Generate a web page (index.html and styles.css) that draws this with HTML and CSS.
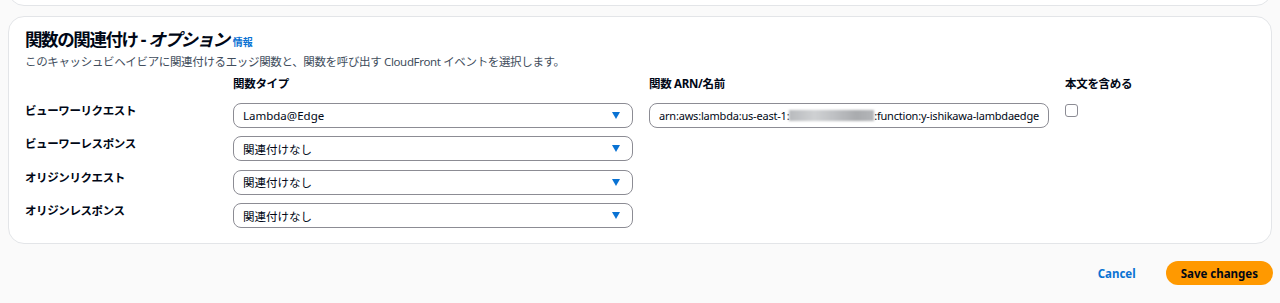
FILE: index.html
```html
<!DOCTYPE html>
<html lang="ja">
<head>
  <meta charset="UTF-8" />
  <meta name="viewport" content="width=device-width, initial-scale=1.0" />
  <title>関数の関連付け</title>
  <link rel="stylesheet" href="styles.css">
</head>
<body>
  <div class="page">
    <div class="card card-prev"></div>

    <div class="card">
      <div class="card-header">
        <h2>関数の関連付け - <em>オプション</em><a href="#" class="info">情報</a></h2>
        <p class="desc">このキャッシュビヘイビアに関連付けるエッジ関数と、関数を呼び出す CloudFront イベントを選択します。</p>
      </div>

      <div class="assoc-grid">
        <div></div>
        <div class="col-head">関数タイプ</div>
        <div class="col-head">関数 ARN/名前</div>
        <div class="col-head">本文を含める</div>

        <div class="row-label">ビューワーリクエスト</div>
        <div class="select">Lambda@Edge<span class="caret"></span></div>
        <div class="input">arn:aws:lambda:us-east-1:<span class="masked"></span>:function:y-ishikawa-lambdaedge</div>
        <div><span class="checkbox"></span></div>

        <div class="row-label">ビューワーレスポンス</div>
        <div class="select">関連付けなし<span class="caret"></span></div>
        <div></div>
        <div></div>

        <div class="row-label">オリジンリクエスト</div>
        <div class="select">関連付けなし<span class="caret"></span></div>
        <div></div>
        <div></div>

        <div class="row-label">オリジンレスポンス</div>
        <div class="select">関連付けなし<span class="caret"></span></div>
        <div></div>
        <div></div>
      </div>
    </div>

    <div class="actions">
      <a href="#" class="btn-cancel">Cancel</a>
      <button class="btn-save">Save changes</button>
    </div>
  </div>
</body>
</html>
```

FILE: styles.css
```css
body {
  margin: 0;
  background-color: #fafafa;
  font-family: 'Noto Sans', 'Noto Sans CJK JP', sans-serif;
  color: #000716;
  overflow: hidden;
}
.page {
  padding: 0 8px;
}
.card {
  background: white;
  border: 1px solid #e3e5e8;
  border-radius: 16px;
  padding: 11px 16px 15px 16px;
}
.card-prev {
  margin-top: -30px;
  padding: 0;
  height: 36px;
  box-sizing: border-box;
  margin-bottom: 10px;
}
.card-header h2 {
  margin: 0;
  font-size: 17.5px;
  line-height: 22px;
  font-weight: 700;
  letter-spacing: -1.4px;
}
.card-header h2 em {
  font-style: italic;
}
.info {
  font-size: 10px;
  font-weight: 700;
  color: #0972d3;
  text-decoration: none;
  letter-spacing: 0;
  margin-left: 4px;
}
.desc {
  margin: 1px 0 0 0;
  font-size: 11.5px;
  line-height: 16px;
  color: #414d5c;
  letter-spacing: -0.35px;
}
.assoc-grid {
  display: grid;
  grid-template-columns: 192px 400px 400px 1fr;
  column-gap: 16px;
  row-gap: 8.5px;
  margin-top: 6px;
}
.col-head {
  font-size: 11.5px;
  font-weight: 700;
  line-height: 16px;
  margin-bottom: 2px;
  letter-spacing: -0.3px;
}
.row-label {
  font-size: 11.5px;
  font-weight: 700;
  line-height: 16px;
  letter-spacing: -0.4px;
}
.select, .input {
  box-sizing: border-box;
  height: 25px;
  border: 1px solid #8c8c94;
  border-radius: 8px;
  display: flex;
  align-items: center;
  padding: 0 9px;
  font-size: 11.5px;
}
.select {
  justify-content: space-between;
}
.input {
  white-space: nowrap;
  overflow: hidden;
  font-size: 11px;
  letter-spacing: -0.2px;
}
.masked {
  display: inline-block;
  width: 86px;
  height: 11px;
  background: linear-gradient(90deg, #b8babd 0%, #cfd1d3 30%, #bdbfc2 55%, #a9abae 80%, #b4b6b9 100%);
  filter: blur(1.2px);
}
.caret {
  width: 0;
  height: 0;
  border-left: 4.5px solid transparent;
  border-right: 4.5px solid transparent;
  border-top: 7px solid #0972d3;
  margin-right: 3px;
}
.checkbox {
  display: block;
  width: 11px;
  height: 11px;
  border: 1px solid #8c8c94;
  border-radius: 3px;
  margin-top: 1px;
}
.actions {
  display: flex;
  justify-content: flex-end;
  align-items: center;
  gap: 30px;
  margin-top: 17px;
}
.btn-cancel {
  color: #0972d3;
  font-size: 11.5px;
  font-weight: 700;
  text-decoration: none;
}
.btn-save {
  background-color: #ff9900;
  color: #000716;
  border: none;
  border-radius: 20px;
  height: 24px;
  padding: 0 15px;
  font-family: inherit;
  font-size: 11.5px;
  font-weight: 700;
  cursor: pointer;
  margin-right: -1px;
}
```
